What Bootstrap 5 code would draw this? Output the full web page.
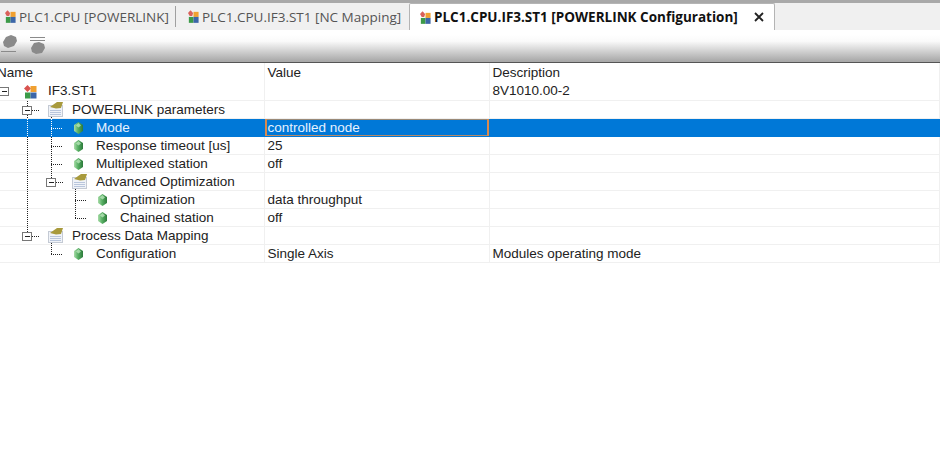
<!DOCTYPE html>
<html lang="en">
<head>
    <meta charset="UTF-8">
    <title>PLC1.CPU.IF3.ST1 [POWERLINK Configuration]</title>
    <link href="https://cdn.jsdelivr.net/npm/bootstrap@5.3.0/dist/css/bootstrap.min.css" rel="stylesheet">
    <style>
        body {
            background-color: #fff;
            overflow: hidden;
            font-family: "Liberation Sans", Arial, sans-serif;
        }
        .tab-strip {
            height: 30px;
            background-color: #f0f0f0;
            border-top: 3px solid #a9a9a9;
            font-family: "Open Sans", sans-serif;
            font-size: 13.5px;
            color: #555;
        }
        .tab-item {
            height: 27px;
            line-height: 26px;
            display: flex;
            align-items: center;
            gap: 3px;
        }
        .tab-first { width: 176px; padding-left: 5px; border-right: 1px solid #a0a0a0; height: 21px; margin-top: 3px; }
        .tab-second { width: 233px; padding-left: 12px; }
        .tab-current {
            width: 366px;
            height: 27px;
            padding-left: 10px;
            background-color: #fff;
            border: 1px solid #b4b4b4;
            border-bottom: 0;
            border-radius: 2px 2px 0 0;
            color: #111;
            font-weight: 700;
        }
        .tab-close { margin-left: 13px; }
        .tool-strip {
            height: 33px;
            padding: 3px 0 0 1px;
            gap: 12px;
            background: linear-gradient(to bottom, #fff 15%, #fafafa 35%, #a9a9a9 97%);
            border-bottom: 1px solid #555;
        }
        .prop-grid {
            table-layout: fixed;
            width: 940px;
            border-collapse: collapse;
            font-size: 13.5px;
            color: #222;
        }
        .prop-grid th, .prop-grid td {
            height: 18px;
            line-height: 17px;
            padding: 0 0 0 3px;
            font-weight: 400;
            border-bottom: 1px solid #f0f0f0;
            border-right: 1px solid #f0f0f0;
            white-space: nowrap;
            overflow: hidden;
        }
        .prop-grid th { height: 19px; border-bottom: 0; }
        .prop-grid td { padding-top: 1px; line-height: 16px; }
        .prop-grid th:first-child { padding-left: 0; text-indent: -3px; }
        .prop-grid td:first-child { padding: 0; }
        .name-cell { display: flex; height: 17px; line-height: 18px; }
        .name-cell svg { flex: none; }
        .row-picked td { background-color: #0078d7; color: #e6f2ff; border-bottom-color: #0078d7; border-right-color: #0078d7; }
        .prop-grid .cell-editing {
            box-shadow: inset 2px 0 0 #d98a4e, inset -2px 0 0 #d98a4e, inset 0 1px 0 #9a8a78, inset 0 -1px 0 #b58a68;
        }
    </style>
</head>
<body>
    <div class="tab-strip d-flex">
        <div class="tab-item tab-first"><svg width="11" height="15" viewBox="0 0 13 15"><use href="#plc-tall"/></svg><span>PLC1.CPU [POWERLINK]</span></div>
        <div class="tab-item tab-second"><svg width="11" height="15" viewBox="0 0 13 15"><use href="#plc-tall"/></svg><span>PLC1.CPU.IF3.ST1 [NC Mapping]</span></div>
        <div class="tab-item tab-current"><svg width="11" height="15" viewBox="0 0 13 15"><use href="#plc-tall"/></svg><span>PLC1.CPU.IF3.ST1 [POWERLINK Configuration]</span>
            <svg class="tab-close" width="10" height="10" viewBox="0 0 10 10"><path d="M1 1l8 8M9 1l-8 8" stroke="#222" stroke-width="1.8"/></svg>
        </div>
    </div>

    <div class="tool-strip d-flex">
        <svg width="16" height="24" viewBox="0 0 16 24">
            <path d="M10 2l5 2 1 4-3 5-6 2-4-2-1-4 3-5z" fill="#8a8a8a"/>
            <path d="M0 18.500h15" stroke="#8a8a8a"/>
        </svg>
        <svg width="16" height="24" viewBox="0 0 16 24">
            <path d="M1 4.500h15M1 7.500h15" stroke="#8a8a8a"/>
            <path d="M10 9l5 2 1 4-3 5-6 1-4-2-1-4 3-5z" fill="#8a8a8a"/>
        </svg>
    </div>

    <table class="prop-grid">
        <colgroup><col style="width:264px"><col style="width:225px"><col></colgroup>
        <thead><tr><th>Name</th><th>Value</th><th>Description</th></tr></thead>
        <tbody id="propRows"></tbody>
    </table>

    <svg width="0" height="0" class="position-absolute">
        <defs>
            <linearGradient id="gemFill" x1="0" x2="1" y1="0" y2="0">
                <stop offset="0" stop-color="#a8dca8"/><stop offset="0.45" stop-color="#58b064"/><stop offset="1" stop-color="#2c7a3a"/>
            </linearGradient>
            <g id="plc-tall">
                <path d="M3 0l3 3.500-1 3.500H2L0 3.500z" fill="#d9605a"/>
                <rect x="6.500" y="2" width="6" height="6" fill="#f0a030"/>
                <rect x="1" y="8" width="5.500" height="7" fill="#3c9a48"/>
                <rect x="6.500" y="8" width="6" height="7" fill="#3c66a8"/>
            </g>
            <g id="plc-icon">
                <path d="M3.500 0l3.500 3.500-3.500 3.500L0 3.500z" fill="#d9534f"/>
                <rect x="6.500" y="1" width="6" height="6" fill="#f0a030"/>
                <rect x="1" y="7.500" width="5.500" height="6" fill="#3c9a48"/>
                <rect x="6.500" y="7.500" width="6" height="6" fill="#3c66a8"/>
            </g>
            <g id="gem-icon">
                <path d="M4.500 0L9 3v6l-4.500 3L0 9V3z" fill="url(#gemFill)"/>
                <path d="M4.500 1L2 3.500l2.500 2 2.500-2z" fill="#c4ecc4" opacity="0.7"/>
            </g>
            <g id="folder-icon">
                <rect x="0.500" y="3.500" width="14" height="11" fill="#f0f3f8" stroke="#c4cad4"/>
                <path d="M2 8.500h11M2 10.500h11M2 12.500h11" stroke="#b9c6dc"/>
                <path d="M2 5l7-5h6l-2 6-5 .5z" fill="#a89a3c"/>
            </g>
        </defs>
    </svg>

    <script>
        // x positions of the tree connectors, row height is 18
        const propRows = [
            { name: 'IF3.ST1', desc: '8V1010.00-2', box: 4, icon: 'plc', at: 24, text: 48 },
            { name: 'POWERLINK parameters', v: [[27, 0, 18], [51, 14, 18]], h: [32, 39], box: 27, icon: 'folder', at: 48, text: 72 },
            { name: 'Mode', value: 'controlled node', picked: true, v: [[27, 0, 18], [51, 0, 18]], h: [51, 63], icon: 'gem', at: 74, text: 96 },
            { name: 'Response timeout [us]', value: '25', v: [[27, 0, 18], [51, 0, 18]], h: [51, 63], icon: 'gem', at: 74, text: 96 },
            { name: 'Multiplexed station', value: 'off', v: [[27, 0, 18], [51, 0, 18]], h: [51, 63], icon: 'gem', at: 74, text: 96 },
            { name: 'Advanced Optimization', v: [[27, 0, 18], [51, 0, 5], [75, 14, 18]], h: [56, 63], box: 51, icon: 'folder', at: 72, text: 96 },
            { name: 'Optimization', value: 'data throughput', v: [[27, 0, 18], [75, 0, 18]], h: [75, 87], icon: 'gem', at: 98, text: 120 },
            { name: 'Chained station', value: 'off', v: [[27, 0, 18], [75, 0, 9]], h: [75, 87], icon: 'gem', at: 98, text: 120 },
            { name: 'Process Data Mapping', v: [[27, 0, 5], [51, 14, 18]], h: [32, 39], box: 27, icon: 'folder', at: 48, text: 72 },
            { name: 'Configuration', value: 'Single Axis', desc: 'Modules operating mode', v: [[51, 0, 9]], h: [51, 63], icon: 'gem', at: 74, text: 96 }
        ];

        function treeSvg(row) {
            let s = '';
            const dot = row.picked ? '#fff' : '#222';
            (row.v || []).forEach(([x, y1, y2]) => {
                s += `<path d="M${x + 0.5} ${y1}V${y2}" stroke="${dot}" stroke-dasharray="1 1"/>`;
            });
            if (row.h) {
                s += `<path d="M${row.h[0]} 9.500H${row.h[1]}" stroke="${dot}" stroke-dasharray="1 1"/>`;
            }
            if (row.box !== undefined) {
                s += `<rect x="${row.box - 4.5}" y="5.500" width="9" height="8" fill="#fff" stroke="#777"/>`;
                s += `<path d="M${row.box - 2} 9.500h5" stroke="#222"/>`;
            }
            const top = row.icon === 'folder' ? 1 : row.icon === 'plc' ? 3 : 3;
            s += `<use href="#${row.icon}-icon" x="${row.at}" y="${top}"/>`;
            return `<svg width="${row.text}" height="17" viewBox="0 0 ${row.text} 17">${s}</svg>`;
        }

        document.getElementById('propRows').innerHTML = propRows.map(row => `
            <tr class="${row.picked ? 'row-picked' : ''}">
                <td><div class="name-cell">${treeSvg(row)}<span>${row.name}</span></div></td>
                <td class="${row.picked ? 'cell-editing' : ''}">${row.value || ''}</td>
                <td>${row.desc || ''}</td>
            </tr>`).join('');
    </script>
    <script src="https://cdn.jsdelivr.net/npm/bootstrap@5.3.0/dist/js/bootstrap.bundle.min.js"></script>
</body>
</html>
